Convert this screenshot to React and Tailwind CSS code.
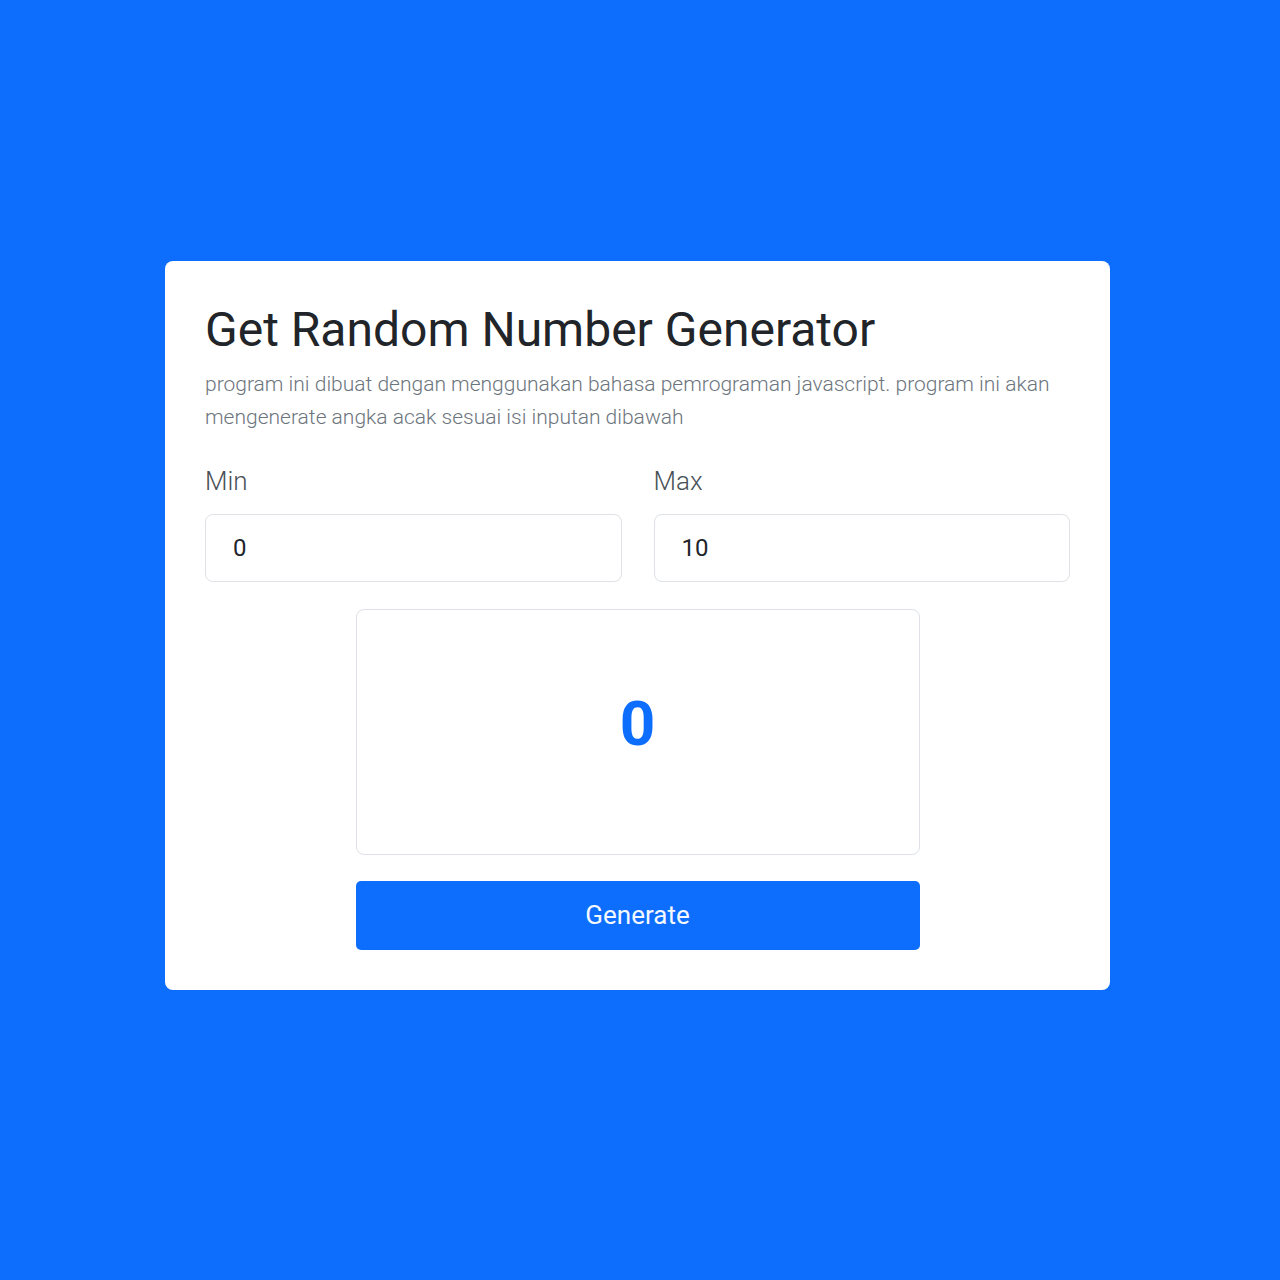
export default function App() {
  return (
    <div className="min-h-[1280px] w-full bg-[#0d6efd] flex justify-start pl-[165px] pt-[261px]" style={{ fontFamily: "Roboto, 'Liberation Sans', sans-serif" }}>
      <div className="w-[945px] h-[729px] bg-white rounded-[8px] px-[40px] pt-[40px] pb-[40px] flex flex-col">
        <h1 className="text-[48px] leading-[57px] text-[#212529] font-normal m-0">Get Random Number Generator</h1>
        <p className="mt-[10px] text-[21px] leading-[33px] text-[#6c757d] font-light">
          program ini dibuat dengan menggunakan bahasa pemrograman javascript. program ini akan mengenerate angka acak sesuai isi inputan dibawah
        </p>
        <div className="mt-[29px] grid grid-cols-2 gap-[32px]">
          <div className="flex flex-col">
            <label className="text-[26px] leading-[36px] text-[#495057] font-light">Min</label>
            <div className="mt-[15px] h-[68px] border border-[#dee2e6] rounded-[8px] flex items-center px-[27px] text-[24px] text-[#212529]">0</div>
          </div>
          <div className="flex flex-col">
            <label className="text-[26px] leading-[36px] text-[#495057] font-light">Max</label>
            <div className="mt-[15px] h-[68px] border border-[#dee2e6] rounded-[8px] flex items-center px-[27px] text-[24px] text-[#212529]">10</div>
          </div>
        </div>
        <div className="mt-[27px] mx-auto w-[564px] h-[246px] border border-[#dee2e6] rounded-[8px] flex justify-center pt-[78px]">
          <span className="text-[62px] leading-[72px] font-bold text-[#0d6efd]">0</span>
        </div>
        <button className="mt-[26px] mx-auto w-[564px] h-[69px] bg-[#0d6efd] rounded-[5px] text-[#f4f8ff] text-[26px] font-normal">Generate</button>
      </div>
    </div>
  );
}
